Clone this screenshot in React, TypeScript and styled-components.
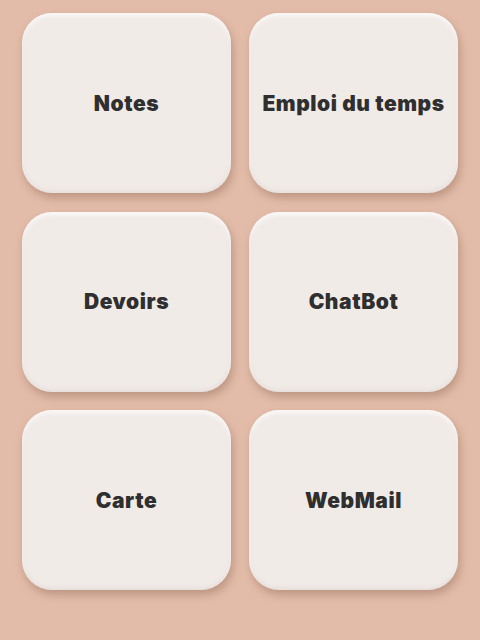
import React from "react";
import styled, { createGlobalStyle } from "styled-components";

const Global = createGlobalStyle`
  html, body { margin: 0; padding: 0; background: #e3bca9; }
  body { font-family: Inter, "Liberation Sans", sans-serif; }
`;

const Page = styled.div`
  width: 480px;
  height: 640px;
  box-sizing: border-box;
  padding: 13px 22px 0 22px;
  background: #e3bca9;
`;

const Grid = styled.div`
  display: grid;
  grid-template-columns: repeat(2, 209px);
  grid-auto-rows: 180px;
  column-gap: 18px;
  row-gap: 18.5px;
`;

const Card = styled.button`
  border: none;
  margin: 0;
  padding: 0;
  border-radius: 30px;
  background: #f1ebe8;
  box-shadow: 2px 5px 9px rgba(120, 80, 60, 0.35),
    inset 0 3px 4px rgba(255, 255, 255, 0.7),
    inset 0 -2px 4px rgba(200, 180, 170, 0.25);
  display: flex;
  align-items: center;
  justify-content: center;
  font-family: Inter, "Liberation Sans", sans-serif;
  font-weight: 900;
  font-size: 21px;
  letter-spacing: 0.55px;
  color: #2f2f2f;
  cursor: pointer;
`;

const items = ["Notes", "Emploi du temps", "Devoirs", "ChatBot", "Carte", "WebMail"];

export default function App() {
  return (
    <>
      <Global />
      <Page>
        <Grid>
          {items.map((t) => (
            <Card key={t}>{t}</Card>
          ))}
        </Grid>
      </Page>
    </>
  );
}
